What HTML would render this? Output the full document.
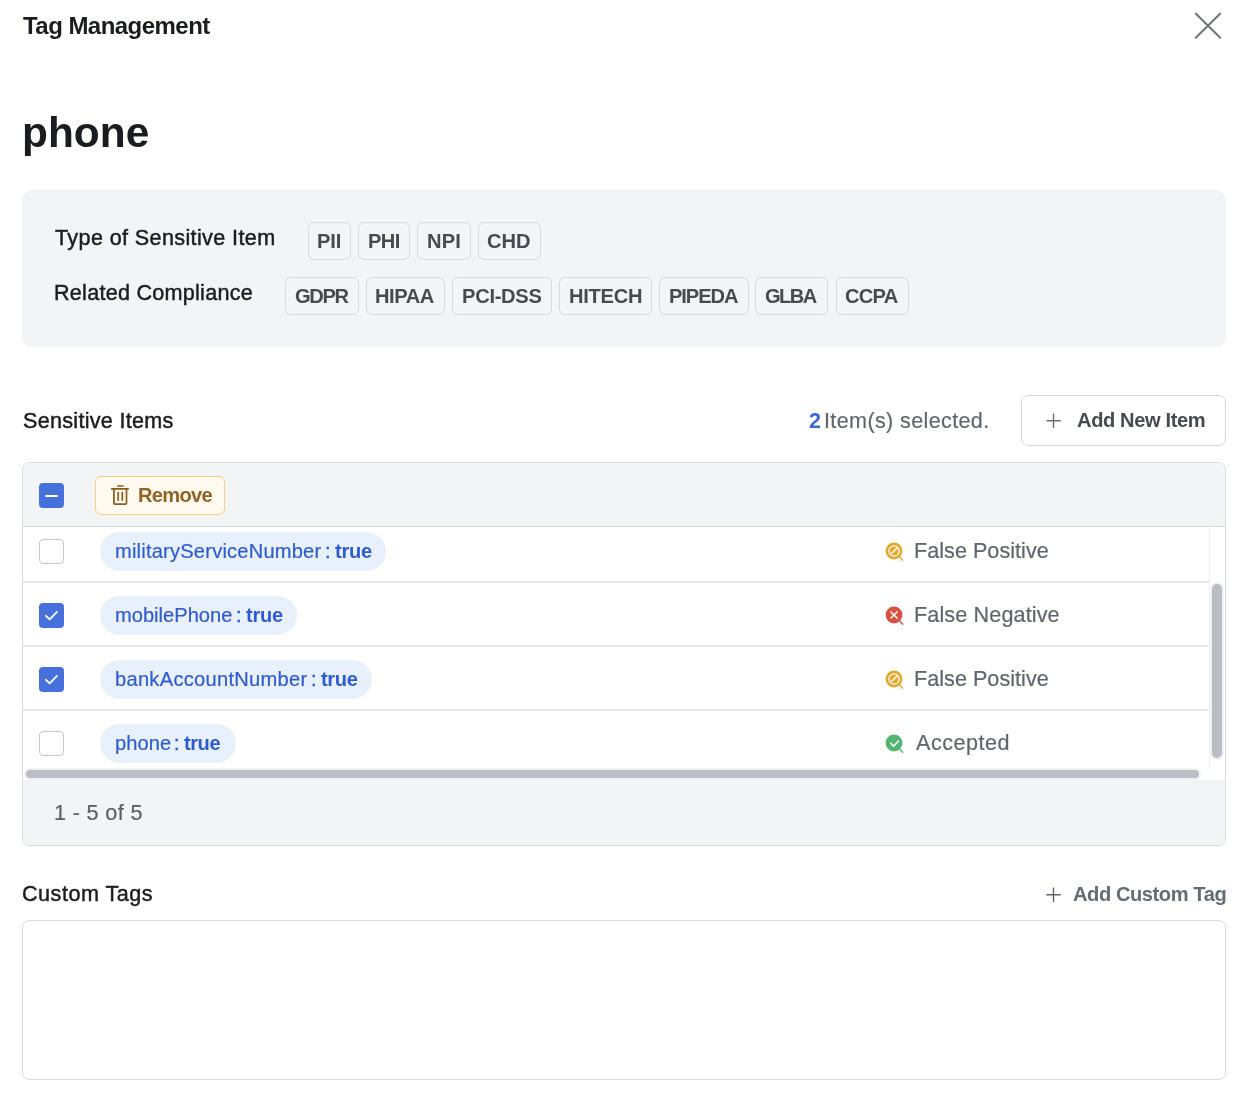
<!DOCTYPE html><html><head><meta charset="utf-8"><title>Tag Management</title><style>
*{box-sizing:border-box;margin:0;padding:0}
html,body{width:1244px;height:1100px;background:#fff;overflow:hidden}
body{position:relative;font-family:"Liberation Sans",sans-serif}
.t{position:absolute;white-space:pre;line-height:1;will-change:transform}
.b{position:absolute}
</style></head><body>
<div class="t" style="left:23.0px;top:14.0px;font-size:24.0px;font-weight:700;letter-spacing:-0.538px;color:#1b1c1f;">Tag Management</div>
<svg class="b" style="left:1190px;top:8px" width="36" height="36" viewBox="0 0 36 36"><path d="M5.2 5L30.8 30.3M30.8 5L5.2 30.3" stroke="#6d7378" stroke-width="2" fill="none"/></svg>
<div class="t" style="left:21.9px;top:112.06px;font-size:42.4px;font-weight:700;letter-spacing:0.025px;color:#1b1c1f;">phone</div>
<div class="b" style="left:22px;top:190px;width:1204px;height:157px;background:#f3f4f6;border-radius:10px"></div>
<div class="t" style="left:55.0px;top:227.34px;font-size:21.6px;font-weight:400;letter-spacing:0.366px;color:#1b1c1f;-webkit-text-stroke:0.45px #1b1c1f;">Type of Sensitive Item</div>
<div class="t" style="left:54.0px;top:282.14px;font-size:21.6px;font-weight:400;letter-spacing:0.253px;color:#1b1c1f;-webkit-text-stroke:0.45px #1b1c1f;">Related Compliance</div>
<div class="b" style="left:307.5px;top:222.2px;width:43.5px;height:38px;border:1px solid #d7d9dd;border-radius:6px"></div>
<div class="t" style="left:317.3px;top:231.31px;font-size:20.1px;font-weight:700;letter-spacing:-0.15px;color:#474a4f;">PII</div>
<div class="b" style="left:358.4px;top:222.2px;width:51.9px;height:38px;border:1px solid #d7d9dd;border-radius:6px"></div>
<div class="t" style="left:368.2px;top:231.31px;font-size:20.1px;font-weight:700;letter-spacing:-0.55px;color:#474a4f;">PHI</div>
<div class="b" style="left:417.2px;top:222.2px;width:53.4px;height:38px;border:1px solid #d7d9dd;border-radius:6px"></div>
<div class="t" style="left:427.0px;top:231.31px;font-size:20.1px;font-weight:700;letter-spacing:0.2px;color:#474a4f;">NPI</div>
<div class="b" style="left:477.6px;top:222.2px;width:63.3px;height:38px;border:1px solid #d7d9dd;border-radius:6px"></div>
<div class="t" style="left:487.4px;top:231.31px;font-size:20.1px;font-weight:700;letter-spacing:0.05px;color:#474a4f;">CHD</div>
<div class="b" style="left:285.2px;top:277.4px;width:73.6px;height:38px;border:1px solid #d7d9dd;border-radius:6px"></div>
<div class="t" style="left:295.0px;top:285.72px;font-size:20.1px;font-weight:700;letter-spacing:-1.333px;color:#474a4f;">GDPR</div>
<div class="b" style="left:365.5px;top:277.4px;width:79.0px;height:38px;border:1px solid #d7d9dd;border-radius:6px"></div>
<div class="t" style="left:375.3px;top:285.72px;font-size:20.1px;font-weight:700;letter-spacing:-0.45px;color:#474a4f;">HIPAA</div>
<div class="b" style="left:452.3px;top:277.4px;width:99.4px;height:38px;border:1px solid #d7d9dd;border-radius:6px"></div>
<div class="t" style="left:462.1px;top:285.72px;font-size:20.1px;font-weight:700;letter-spacing:-0.267px;color:#474a4f;">PCI-DSS</div>
<div class="b" style="left:559.3px;top:277.4px;width:92.5px;height:38px;border:1px solid #d7d9dd;border-radius:6px"></div>
<div class="t" style="left:569.1px;top:285.72px;font-size:20.1px;font-weight:700;letter-spacing:-0.26px;color:#474a4f;">HITECH</div>
<div class="b" style="left:659px;top:277.4px;width:89.5px;height:38px;border:1px solid #d7d9dd;border-radius:6px"></div>
<div class="t" style="left:668.8px;top:285.72px;font-size:20.1px;font-weight:700;letter-spacing:-1.06px;color:#474a4f;">PIPEDA</div>
<div class="b" style="left:755.3px;top:277.4px;width:72.4px;height:38px;border:1px solid #d7d9dd;border-radius:6px"></div>
<div class="t" style="left:765.1px;top:285.72px;font-size:20.1px;font-weight:700;letter-spacing:-1.534px;color:#474a4f;">GLBA</div>
<div class="b" style="left:835.5px;top:277.4px;width:73.5px;height:38px;border:1px solid #d7d9dd;border-radius:6px"></div>
<div class="t" style="left:845.3px;top:285.72px;font-size:20.1px;font-weight:700;letter-spacing:-0.766px;color:#474a4f;">CCPA</div>
<div class="t" style="left:22.5px;top:409.94px;font-size:21.6px;font-weight:400;letter-spacing:0.278px;color:#1b1c1f;-webkit-text-stroke:0.45px #1b1c1f;">Sensitive Items</div>
<div class="t" style="left:808.6px;top:409.94px;font-size:21.6px;font-weight:700;letter-spacing:0.0px;color:#3d69d6;">2</div>
<div class="t" style="left:823.9px;top:409.94px;font-size:21.6px;font-weight:400;letter-spacing:0.35px;color:#62676e;-webkit-text-stroke:0.2px #62676e;">Item(s)</div>
<div class="t" style="left:899.7px;top:409.94px;font-size:21.6px;font-weight:400;letter-spacing:0.35px;color:#62676e;-webkit-text-stroke:0.2px #62676e;">selected.</div>
<div class="b" style="left:1021px;top:395px;width:205px;height:51px;border:1px solid #d3d6da;border-radius:7px;background:#fff"></div>
<svg class="b" style="left:1044px;top:411px" width="19" height="19" viewBox="0 0 19 19"><path d="M9.5 2.5V17M2.5 9.8H16.8" stroke="#6b7075" stroke-width="1.4" fill="none"/></svg>
<div class="t" style="left:1076.5px;top:410.42px;font-size:20.1px;font-weight:700;letter-spacing:-0.381px;color:#474b50;">Add New Item</div>
<div class="b" style="left:22px;top:462px;width:1204px;height:384px;border:1px solid #d9dbdf;border-radius:7px;overflow:hidden;background:#fff">
 <div class="b" style="left:0;top:0;width:1202px;height:64px;background:#f3f4f6;border-bottom:1px solid #d9dbdf"></div>
 <div class="b" style="left:0;top:317px;width:1202px;height:66px;background:#f3f4f6"></div>
 <div class="b" style="left:0;top:118.25px;width:1186px;height:1.5px;background:#e3e5e9"></div>
 <div class="b" style="left:0;top:182.25px;width:1186px;height:1.5px;background:#e3e5e9"></div>
 <div class="b" style="left:0;top:246.25px;width:1186px;height:1.5px;background:#e3e5e9"></div>
 <div class="b" style="left:1186px;top:64px;width:1px;height:241px;background:#f0f1f3"></div>
 <div class="b" style="left:1189px;top:121px;width:10px;height:173.5px;background:#babec2;border-radius:5px;box-shadow:0 0 0 2px #f0f1f3"></div>
 <div class="b" style="left:3px;top:307px;width:1173px;height:8px;background:#babec2;border-radius:4px;box-shadow:0 0 0 2px #f0f1f3"></div>
</div>
<div class="b" style="left:39px;top:483px;width:25px;height:25px;background:#4670db;border-radius:4px"></div>
<div class="b" style="left:45px;top:494.7px;width:13px;height:2.2px;background:#fff;border-radius:1px"></div>
<div class="b" style="left:95px;top:476px;width:130px;height:39px;background:#fffaf0;border:1px solid #f0d27c;border-radius:6px"></div>
<svg class="b" style="left:108px;top:483px" width="24" height="24" viewBox="0 0 24 24"><g stroke="#8b5c1c" stroke-width="1.7" fill="none" stroke-linecap="round"><path d="M9.8 3H14.9"/><path d="M3.7 5.9H20.2"/><path d="M5.9 6V20.3Q5.9 21.1 6.7 21.1H17.7Q18.5 21.1 18.5 20.3V6"/><path d="M10.2 9.6V17.1M14.3 9.6V17.1"/></g></svg>
<div class="t" style="left:137.5px;top:484.72px;font-size:20.1px;font-weight:700;letter-spacing:-0.7px;color:#926322;">Remove</div>
<div class="b" style="left:39px;top:539px;width:25px;height:25px;background:#fff;border:1px solid #c4c7cc;border-radius:4px"></div>
<div class="b" style="left:100.0px;top:532.0px;width:285.9px;height:38.8px;background:#e8f0fb;border-radius:20px"></div>
<div class="t" style="left:115.3px;top:541.12px;font-size:20.1px;font-weight:400;letter-spacing:0.205px;color:#2f5cd0;-webkit-text-stroke:0.2px #2f5cd0;">militaryServiceNumber</div>
<div class="t" style="left:324.6px;top:541.12px;font-size:20.1px;font-weight:400;letter-spacing:0.0px;color:#2f5cd0;-webkit-text-stroke:0.45px #2f5cd0;">:</div>
<div class="t" style="left:334.7px;top:541.12px;font-size:20.1px;font-weight:700;letter-spacing:-0.234px;color:#2f5cd0;">true</div>
<svg class="b" style="left:884.7px;top:541.8px" width="22" height="22" viewBox="0 0 22 22"><circle cx="9" cy="9" r="7.1" fill="none" stroke="#e2a92e" stroke-width="2.7"/><circle cx="9" cy="9" r="4.5" fill="#e2a92e"/><path d="M5.9 12.1L12.1 5.9" stroke="#fff" stroke-width="1.4"/><path d="M14.8 15L17.7 18.3" stroke="#e2a92e" stroke-width="1.3" stroke-linecap="round"/></svg>
<div class="t" style="left:913.9px;top:540.14px;font-size:21.6px;font-weight:400;letter-spacing:0.024px;color:#5f656d;-webkit-text-stroke:0.2px #5f656d;">False Positive</div>
<div class="b" style="left:39px;top:603px;width:25px;height:25px;background:#4670db;border-radius:4px"></div>
<svg class="b" style="left:39px;top:603px" width="25" height="25" viewBox="0 0 25 25"><path d="M6.9 12.9L10.6 16.3L18 8.9" stroke="#fff" stroke-width="1.9" fill="none" stroke-linecap="round" stroke-linejoin="round"/></svg>
<div class="b" style="left:100.0px;top:596.05px;width:196.7px;height:38.8px;background:#e8f0fb;border-radius:20px"></div>
<div class="t" style="left:114.9px;top:605.21px;font-size:20.1px;font-weight:400;letter-spacing:0.01px;color:#2f5cd0;-webkit-text-stroke:0.2px #2f5cd0;">mobilePhone</div>
<div class="t" style="left:235.5px;top:605.21px;font-size:20.1px;font-weight:400;letter-spacing:0.0px;color:#2f5cd0;-webkit-text-stroke:0.45px #2f5cd0;">:</div>
<div class="t" style="left:245.6px;top:605.21px;font-size:20.1px;font-weight:700;letter-spacing:-0.234px;color:#2f5cd0;">true</div>
<svg class="b" style="left:884.7px;top:605.8px" width="22" height="22" viewBox="0 0 22 22"><circle cx="9" cy="9" r="8.4" fill="#d9503f"/><path d="M5.5 5.5L12.5 12.5M12.5 5.5L5.5 12.5" stroke="#fff" stroke-width="1.5"/><path d="M14.8 15L17.7 18.3" stroke="#d9503f" stroke-width="1.3" stroke-linecap="round"/></svg>
<div class="t" style="left:913.5px;top:604.14px;font-size:21.6px;font-weight:400;letter-spacing:0.122px;color:#5f656d;-webkit-text-stroke:0.2px #5f656d;">False Negative</div>
<div class="b" style="left:39px;top:667px;width:25px;height:25px;background:#4670db;border-radius:4px"></div>
<svg class="b" style="left:39px;top:667px" width="25" height="25" viewBox="0 0 25 25"><path d="M6.9 12.9L10.6 16.3L18 8.9" stroke="#fff" stroke-width="1.9" fill="none" stroke-linecap="round" stroke-linejoin="round"/></svg>
<div class="b" style="left:100.0px;top:660.05px;width:271.8px;height:38.8px;background:#e8f0fb;border-radius:20px"></div>
<div class="t" style="left:114.9px;top:669.21px;font-size:20.1px;font-weight:400;letter-spacing:0.281px;color:#2f5cd0;-webkit-text-stroke:0.2px #2f5cd0;">bankAccountNumber</div>
<div class="t" style="left:310.6px;top:669.21px;font-size:20.1px;font-weight:400;letter-spacing:0.0px;color:#2f5cd0;-webkit-text-stroke:0.45px #2f5cd0;">:</div>
<div class="t" style="left:320.5px;top:669.21px;font-size:20.1px;font-weight:700;letter-spacing:-0.333px;color:#2f5cd0;">true</div>
<svg class="b" style="left:884.7px;top:669.8px" width="22" height="22" viewBox="0 0 22 22"><circle cx="9" cy="9" r="7.1" fill="none" stroke="#e2a92e" stroke-width="2.7"/><circle cx="9" cy="9" r="4.5" fill="#e2a92e"/><path d="M5.9 12.1L12.1 5.9" stroke="#fff" stroke-width="1.4"/><path d="M14.8 15L17.7 18.3" stroke="#e2a92e" stroke-width="1.3" stroke-linecap="round"/></svg>
<div class="t" style="left:913.9px;top:668.14px;font-size:21.6px;font-weight:400;letter-spacing:0.024px;color:#5f656d;-webkit-text-stroke:0.2px #5f656d;">False Positive</div>
<div class="b" style="left:39px;top:731px;width:25px;height:25px;background:#fff;border:1px solid #c4c7cc;border-radius:4px"></div>
<div class="b" style="left:100.0px;top:724.05px;width:136.1px;height:38.8px;background:#e8f0fb;border-radius:20px"></div>
<div class="t" style="left:115.3px;top:733.41px;font-size:20.1px;font-weight:400;letter-spacing:0.05px;color:#2f5cd0;-webkit-text-stroke:0.2px #2f5cd0;">phone</div>
<div class="t" style="left:174.1px;top:733.41px;font-size:20.1px;font-weight:400;letter-spacing:0.0px;color:#2f5cd0;-webkit-text-stroke:0.45px #2f5cd0;">:</div>
<div class="t" style="left:184.2px;top:733.41px;font-size:20.1px;font-weight:700;letter-spacing:-0.467px;color:#2f5cd0;">true</div>
<svg class="b" style="left:884.7px;top:733.8px" width="22" height="22" viewBox="0 0 22 22"><circle cx="9" cy="9" r="8.4" fill="#52b46f"/><path d="M5.3 8.9L8.6 12.1L13.9 6.6" stroke="#fff" stroke-width="1.5" fill="none"/><path d="M14.8 15L17.7 18.3" stroke="#52b46f" stroke-width="1.3" stroke-linecap="round"/></svg>
<div class="t" style="left:915.5px;top:732.14px;font-size:21.6px;font-weight:400;letter-spacing:0.5px;color:#5f656d;-webkit-text-stroke:0.2px #5f656d;">Accepted</div>
<div class="t" style="left:54.0px;top:801.84px;font-size:21.6px;font-weight:400;letter-spacing:0.355px;color:#5a5f66;-webkit-text-stroke:0.2px #5a5f66;">1 - 5 of 5</div>
<div class="t" style="left:22.2px;top:883.24px;font-size:21.6px;font-weight:400;letter-spacing:0.5px;color:#1b1c1f;-webkit-text-stroke:0.45px #1b1c1f;">Custom Tags</div>
<svg class="b" style="left:1044px;top:885px" width="19" height="19" viewBox="0 0 19 19"><path d="M9.5 2.5V17M2.3 9.7H16.7" stroke="#5e646b" stroke-width="1.4" fill="none"/></svg>
<div class="t" style="left:1073.4px;top:884.31px;font-size:20.1px;font-weight:700;letter-spacing:-0.43px;color:#656b72;">Add Custom Tag</div>
<div class="b" style="left:22px;top:920px;width:1204px;height:160px;border:1px solid #d9dbdf;border-radius:7px"></div>
</body></html>
